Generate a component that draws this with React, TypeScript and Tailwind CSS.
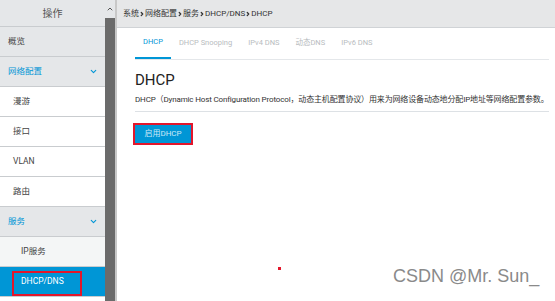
import { Fragment } from "react";
import { ChevronDown, ChevronRight, ChevronUp } from "lucide-react";

const font = { fontFamily: 'Roboto, "Noto Sans CJK SC", sans-serif' };

type Row = {
  label: string;
  level: 1 | 2 | 3;
  tone: "gray" | "white" | "light" | "active";
  open?: boolean;
  boxed?: boolean;
};

const rows: Row[] = [
  { label: "概览", level: 1, tone: "gray" },
  { label: "网络配置", level: 1, tone: "gray", open: true },
  { label: "漫游", level: 2, tone: "white" },
  { label: "接口", level: 2, tone: "white" },
  { label: "VLAN", level: 2, tone: "white" },
  { label: "路由", level: 2, tone: "white" },
  { label: "服务", level: 1, tone: "gray", open: true },
  { label: "IP服务", level: 3, tone: "light" },
  { label: "DHCP/DNS", level: 3, tone: "active", boxed: true },
];

const crumbs = ["系统", "网络配置", "服务", "DHCP/DNS", "DHCP"];
const tabs = ["DHCP", "DHCP Snooping", "IPv4 DNS", "动态DNS", "IPv6 DNS"];

function SideRow({ row }: { row: Row }) {
  const bg =
    row.tone === "gray"
      ? "bg-[#e5e7e9]"
      : row.tone === "light"
        ? "bg-[#f4f6f6]"
        : row.tone === "active"
          ? "bg-[#0096d6]"
          : "bg-white";
  const color = row.tone === "active" ? "text-white" : row.open ? "text-[#0096d6]" : "text-[#444]";
  const pad = row.level === 1 ? "pl-[8px]" : row.level === 2 ? "pl-[13px]" : "pl-[21px]";

  return (
    <div className={`relative flex h-[30px] items-center border-b border-[#c9cccf] ${bg} ${pad} pr-[7px]`}>
      <span className={`text-[8.5px] ${color}`}>{row.label}</span>
      {row.open ? <ChevronDown className="ml-auto size-[9px] text-[#0096d6]" strokeWidth={3} /> : null}
      {row.boxed ? (
        <div className="absolute left-[12px] top-[4px] h-[25px] w-[70px] border-2 border-[#e3162b]" />
      ) : null}
    </div>
  );
}

export default function App() {
  return (
    <div className="flex h-[301px] w-[555px] overflow-hidden bg-white" style={font}>
      <aside className="flex w-[117px] shrink-0">
        <div className="w-[105px]">
          <div className="flex h-[27px] items-center justify-center border-b border-[#c9cccf] bg-[#e5e7e9] text-[10px] text-[#555]">
            操作
          </div>
          {rows.map((row) => (
            <SideRow key={row.label} row={row} />
          ))}
        </div>
        <div className="flex w-[12px] flex-col bg-[#c8c8c8]">
          <div className="flex h-[18px] w-[10px] items-center justify-center bg-[#e5e7e9]">
            <ChevronUp className="size-[8px] text-[#555]" strokeWidth={3} />
          </div>
          <div className="w-[10px] flex-1 bg-[#6b6b6b]" />
        </div>
      </aside>

      <main className="relative flex-1">
        <div className="flex h-[28px] items-center border-b border-[#d0d3d6] bg-[#e6e7e8] pl-[6px] text-[8px] text-[#333]">
          {crumbs.map((c, i) => (
            <Fragment key={c + i}>
              {i > 0 ? <ChevronRight className="size-[6px] text-[#333]" strokeWidth={5} /> : null}
              <span>{c}</span>
            </Fragment>
          ))}
        </div>

        <div className="pl-[18px] pr-[6px]">
          <div className="flex h-[32px] items-end border-b border-[#e4e7ea]">
            {tabs.map((tab, i) => (
              <div
                key={tab}
                className={`flex h-[32px] items-center px-[8px] text-[7.5px] ${
                  i === 0 ? "border-b-2 border-[#0096d6] text-[#0096d6]" : "text-[#b8bcc0]"
                }`}
              >
                {tab}
              </div>
            ))}
          </div>

          <div className="mt-[13px] text-[15px] leading-none text-[#222]">DHCP</div>
          <div className="mt-[7px] whitespace-nowrap border-b border-[#dde1e5] pb-[6px] text-[8px] leading-[10px] tracking-[-0.15px] text-[#333]">
            DHCP（Dynamic Host Configuration Protocol，动态主机配置协议）用来为网络设备动态地分配IP地址等网络配置参数。
          </div>

          <div className="mt-[11px] ml-[-2px] inline-block border-2 border-[#e3162b]">
            <button
              type="button"
              className="flex h-[18px] w-[56px] items-center justify-center bg-[#0096d6] text-[8px] text-[#cde9f7]"
            >
              启用DHCP
            </button>
          </div>
        </div>

        <div className="absolute left-[161px] top-[267px] size-[3px] bg-[#e3162b]" />
        <div
          className="absolute left-[276px] top-[263px] text-[18px] text-[#8a8a8a]"
          style={{ fontFamily: '"Liberation Sans", sans-serif' }}
        >
          CSDN @Mr. Sun_
        </div>
      </main>
    </div>
  );
}
